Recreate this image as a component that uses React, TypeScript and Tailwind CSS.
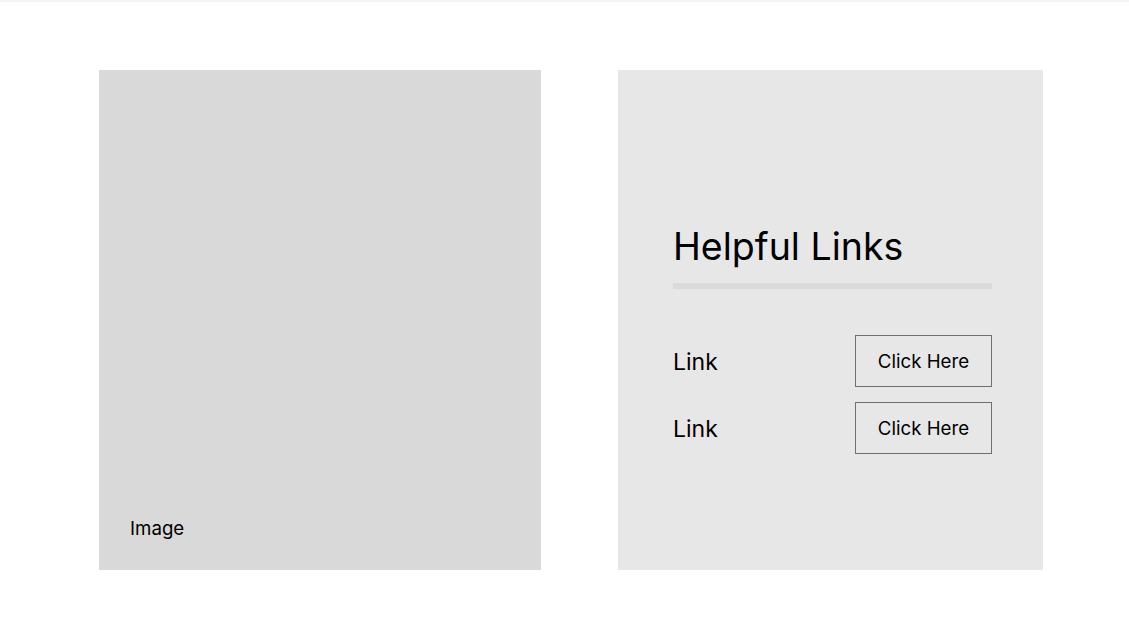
export default function App() {
  const links = ['Link', 'Link'];
  return (
    <div className="min-h-[634px] w-full bg-white border-t-2 border-[#f3f3f3] font-['Inter',sans-serif] text-black">
      <div className="flex pl-[99px] pt-[68px] gap-[77px]">
        {/* Image placeholder */}
        <div className="w-[442px] h-[500px] bg-[#d9d9d9] flex flex-col justify-end pl-[31px] pb-[30px]">
          <span className="text-[18.7px] leading-[23px]">Image</span>
        </div>

        {/* Helpful links card */}
        <div className="w-[425px] h-[500px] bg-[#e7e7e7] pl-[55px] pr-[51px] pt-[154px]">
          <h2 className="text-[37.5px] leading-[45px] font-normal">Helpful Links</h2>
          <div className="mt-[14px] h-[6px] bg-[#dadada]" />
          <div className="mt-[46px] flex flex-col gap-[15px]">
            {links.map((l, i) => (
              <div key={i} className="flex items-center justify-between">
                <span className="text-[23px] leading-[28px] pt-[1px]">{l}</span>
                <button className="w-[137px] h-[52px] border border-[#707070] text-[18.7px] leading-[23px] pt-[1px] flex items-center justify-center">
                  Click Here
                </button>
              </div>
            ))}
          </div>
        </div>
      </div>
    </div>
  );
}
